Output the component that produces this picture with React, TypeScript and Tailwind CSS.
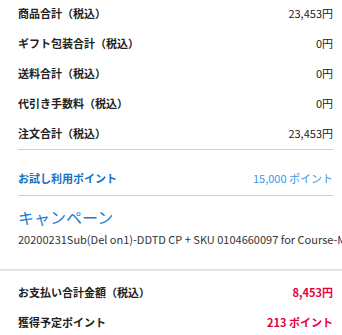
import React from 'react';

const ROWS = [
  { label: '商品合計（税込）', value: '23,453円' },
  { label: 'ギフト包装合計（税込）', value: '0円' },
  { label: '送料合計（税込）', value: '0円' },
  { label: '代引き手数料（税込）', value: '0円' },
  { label: '注文合計（税込）', value: '23,453円' },
];

const font = { fontFamily: '"Noto Sans CJK JP", "Noto Sans", sans-serif' };

export default function App() {
  return (
    <div className="w-[342px] h-[335px] bg-white overflow-hidden text-[#222]" style={font}>
      <div className="pl-[18px] pr-[9px]">
        <div className="flex flex-col gap-[16px] pt-[6px]">
          {ROWS.map((r) => (
            <div key={r.label} className="flex justify-between items-center h-[14px] text-[11px] leading-[14px]">
              <span className="font-bold">{r.label}</span>
              <span>{r.value}</span>
            </div>
          ))}
        </div>
        <div className="mt-[9px] h-px bg-[#cfcfcf]" />
        <div className="mt-[21px] flex justify-between items-center h-[14px] text-[11px] leading-[14px]">
          <span className="font-bold text-[#1a6fc4]">お試し利用ポイント</span>
          <span className="text-[#3b97e3]">15,000 ポイント</span>
        </div>
        <div className="mt-[10px] h-px bg-[#cfcfcf]" />
        <h2 className="mt-[11px] text-[16px] leading-[20px] text-[#1a7bd3]">キャンペーン</h2>
        <p className="mt-[4px] text-[11px] leading-[16px] whitespace-nowrap text-[#333]">
          20200231Sub(Del on1)-DDTD CP + SKU 0104660097 for Course-M
        </p>
      </div>
      <div className="mt-[22px] h-[2px] bg-[#e3e3e3]" />
      <div className="pl-[18px] pr-[9px] flex flex-col gap-[16px] mt-[14px]">
        <div className="flex justify-between items-center h-[14px] text-[11px] leading-[14px]">
          <span className="font-bold">お支払い合計金額（税込）</span>
          <span className="font-bold text-[#e6003d]">8,453円</span>
        </div>
        <div className="flex justify-between items-center h-[14px] text-[11px] leading-[14px]">
          <span className="font-bold">獲得予定ポイント</span>
          <span className="font-bold text-[#e6003d]">213 ポイント</span>
        </div>
      </div>
    </div>
  );
}
